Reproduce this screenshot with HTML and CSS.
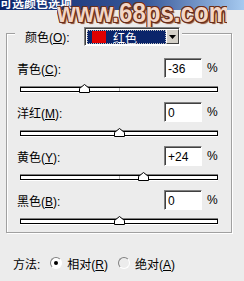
FILE: index.html
```html
<!DOCTYPE html>
<html lang="zh">
<head>
  <meta charset="UTF-8">
  <title>可选颜色选项</title>
  <link rel="stylesheet" href="styles.css">
</head>
<body>
  <div class="titlebar"><span class="title">可选颜色选项</span></div>
  <div class="watermark"><span>www.68ps.com</span></div>

  <div class="group">
    <div class="legend">
      <span class="lbl">颜色(<u>O</u>):</span>
      <div class="select">
        <div class="current"><span class="swatch"></span>红色</div>
        <div class="drop">
          <svg width="7" height="4" viewBox="0 0 7 4"><polygon points="0,0 7,0 3.5,4" fill="#000"/></svg>
        </div>
      </div>
    </div>

    <div class="row"><span class="name">青色(<u>C</u>):</span><span class="field">-36</span><span class="pct">%</span></div>
    <div class="slider"><div class="track"><span class="mid"></span><svg class="thumb" style="left:32%" width="11" height="9" viewBox="0 0 11 9"><polygon points="0.5,8.5 0.5,4.5 5.5,0.5 10.5,4.5 10.5,8.5" fill="#fff" stroke="#000"/></svg></div></div>

    <div class="row"><span class="name">洋红(<u>M</u>):</span><span class="field">0</span><span class="pct">%</span></div>
    <div class="slider"><div class="track"><span class="mid"></span><svg class="thumb" style="left:50%" width="11" height="9" viewBox="0 0 11 9"><polygon points="0.5,8.5 0.5,4.5 5.5,0.5 10.5,4.5 10.5,8.5" fill="#fff" stroke="#000"/></svg></div></div>

    <div class="row"><span class="name">黄色(<u>Y</u>):</span><span class="field">+24</span><span class="pct">%</span></div>
    <div class="slider"><div class="track"><span class="mid"></span><svg class="thumb" style="left:62%" width="11" height="9" viewBox="0 0 11 9"><polygon points="0.5,8.5 0.5,4.5 5.5,0.5 10.5,4.5 10.5,8.5" fill="#fff" stroke="#000"/></svg></div></div>

    <div class="row"><span class="name">黑色(<u>B</u>):</span><span class="field">0</span><span class="pct">%</span></div>
    <div class="slider"><div class="track"><span class="mid"></span><svg class="thumb" style="left:50%" width="11" height="9" viewBox="0 0 11 9"><polygon points="0.5,8.5 0.5,4.5 5.5,0.5 10.5,4.5 10.5,8.5" fill="#fff" stroke="#000"/></svg></div></div>
  </div>

  <div class="method">
    <span class="mlabel">方法:</span>
    <span class="radio on"></span><span class="opt">相对(<u>R</u>)</span>
    <span class="radio"></span><span class="opt">绝对(<u>A</u>)</span>
  </div>
</body>
</html>
```

FILE: styles.css
```css
body {
  margin: 0;
  width: 244px;
  height: 281px;
  overflow: hidden;
  background: #ececec;
  font-family: "Liberation Sans", "Noto Sans CJK SC", sans-serif;
  font-size: 12px;
  color: #000;
  position: relative;
}

u {
  text-decoration: underline;
}

/* title bar, clipped at the top */
.titlebar {
  height: 10px;
  overflow: hidden;
  background: linear-gradient(to right, #0a246a 0%, #3a5a9a 60%, #a6caf0 100%);
}

.title {
  display: block;
  margin-top: -3px;
  color: #fff;
  font-weight: bold;
  font-size: 12px;
  line-height: 14px;
}

.watermark {
  position: absolute;
  left: 57px;
  top: -3px;
  width: 170px;
  height: 30px;
  overflow: hidden;
}

.watermark span {
  display: inline-block;
  white-space: nowrap;
  transform: scaleX(0.86);
  transform-origin: left top;
  font-family: "Liberation Sans", sans-serif;
  font-weight: bold;
  font-size: 28px;
  color: #f3d6c6;
  text-shadow: 1px 0 0 #6a2e1a, -1px 0 0 #6a2e1a, 0 1px 0 #6a2e1a, 0 -1px 0 #6a2e1a,
    1px 1px 0 #6a2e1a, -1px -1px 0 #6a2e1a, 1px -1px 0 #6a2e1a, -1px 1px 0 #6a2e1a,
    2px 2px 1px #8a4a30;
}

/* group box */
.group {
  margin: 23px 0 0 6px;
  width: 226px;
  border: 1px solid #a0a0a0;
  box-shadow: 1px 1px 0 #fff, inset 1px 1px 0 #fff;
  padding: 0 14px 8px 10px;
  box-sizing: border-box;
}

.legend {
  display: flex;
  align-items: center;
  height: 19px;
  margin: -7px 0 0 -2px;
  padding: 0 2px 0 10px;
  width: fit-content;
  background: #ececec;
}

.lbl {
  width: 59px;
}

.select {
  display: flex;
  width: 96px;
  height: 19px;
  box-sizing: border-box;
  border: 1px solid;
  border-color: #808080 #fff #fff #808080;
  box-shadow: inset 1px 1px 0 #404040;
  background: #fff;
  padding: 2px 0 1px 2px;
}

.current {
  flex: 1;
  display: flex;
  align-items: center;
  background: #0a246a;
  color: #fff;
  outline: 1px dotted #c0c0c0;
  outline-offset: -1px;
  padding-left: 5px;
}

.swatch {
  width: 14px;
  height: 12px;
  background: #e00000;
  margin-right: 7px;
}

.drop {
  width: 13px;
  margin-top: -1px;
  display: flex;
  align-items: center;
  justify-content: center;
  background: #d4d0c8;
  border: 1px solid;
  border-color: #fff #404040 #404040 #fff;
  box-sizing: border-box;
}

/* value rows */
.row {
  display: flex;
  align-items: center;
  height: 20px;
}

.legend + .row {
  margin-top: 12px;
}

.name {
  flex: 1;
}

.field {
  width: 38px;
  height: 20px;
  box-sizing: border-box;
  border: 1px solid;
  border-color: #808080 #fff #fff #808080;
  box-shadow: inset 1px 1px 0 #404040;
  background: #fff;
  padding: 3px 0 0 3px;
  line-height: 14px;
}

.pct {
  margin-left: 5px;
  width: 10px;
}

.slider {
  height: 24px;
  padding: 9px 0 0 3px;
  box-sizing: border-box;
}

.slider:last-child {
  height: 14px;
}

.track {
  position: relative;
  width: 198px;
  height: 5px;
  box-sizing: border-box;
  border: 1px solid #000;
  box-shadow: 0 -1px 0 #808080, 0 1px 0 #fff;
  background: #fff;
}

.mid {
  position: absolute;
  left: 98px;
  top: 0;
  width: 1px;
  height: 3px;
  background: #b0b0b0;
}

.thumb {
  position: absolute;
  top: -4px;
  margin-left: -5px;
}

/* method radios */
.method {
  display: flex;
  align-items: center;
  height: 14px;
  margin-top: 23px;
  padding-left: 13px;
}

.mlabel {
  margin-right: 10px;
}

.radio {
  width: 12px;
  height: 12px;
  box-sizing: border-box;
  border-radius: 50%;
  border: 1px solid;
  border-color: #808080 #fff #fff #808080;
  position: relative;
  margin-right: 5px;
}

.radio.on {
  background: #fff;
}

.radio.on::after {
  content: "";
  position: absolute;
  left: 3px;
  top: 3px;
  width: 4px;
  height: 4px;
  border-radius: 50%;
  background: #000;
}

.opt {
  margin-right: 10px;
}
```
